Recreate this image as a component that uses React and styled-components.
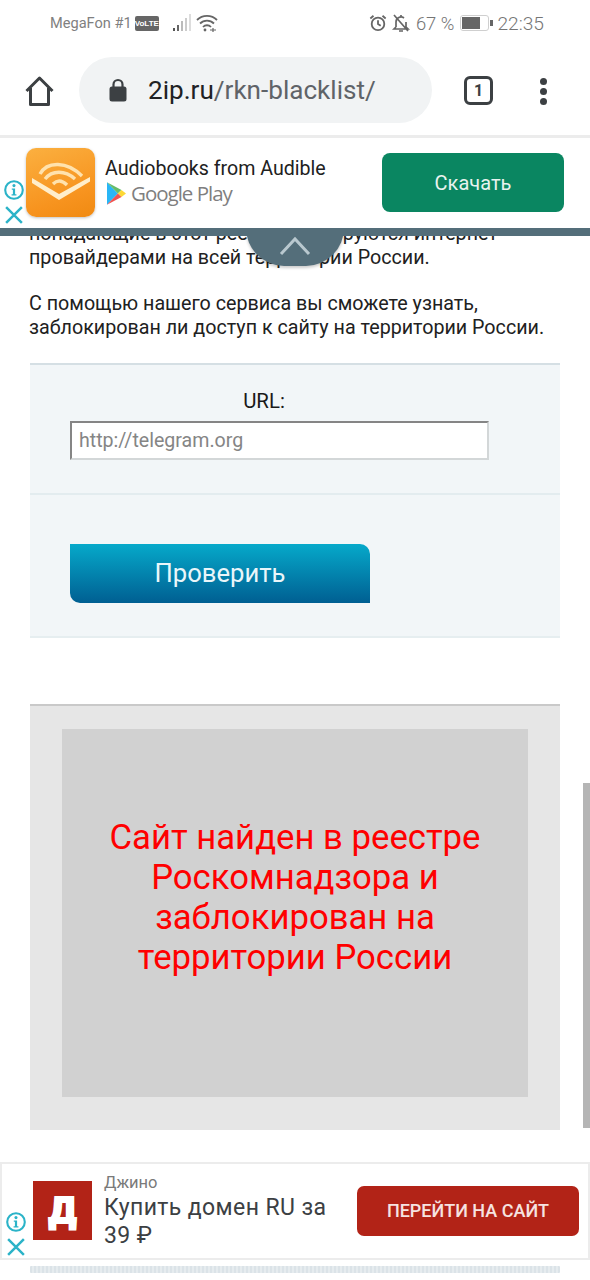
import React from 'react';
import styled, { createGlobalStyle } from 'styled-components';

const Global = createGlobalStyle`
  html, body { margin: 0; padding: 0; background: #fff; }
  body { font-family: Roboto, "Noto Sans", sans-serif; }
  * { box-sizing: border-box; }
`;

const Page = styled.div`
  position: relative;
  width: 590px;
  height: 1280px;
  overflow: hidden;
  background: #fff;
`;

const TopChrome = styled.header`
  position: relative;
  z-index: 3;
  background: #fff;
  height: 138px;
  border-bottom: 3px solid #ececec;
`;

const StatusBar = styled.div`
  height: 46px;
  display: flex;
  align-items: center;
  justify-content: space-between;
  padding: 0 46px 0 50px;
  color: #777;
`;

const StatusGroup = styled.div`
  display: flex;
  align-items: center;
`;

const Carrier = styled.span`
  font-size: 14.6px;
  color: #808080;
`;

const Volte = styled.span`
  margin-left: 3px;
  width: 24px;
  height: 15px;
  background: #666;
  border-radius: 2px;
  color: #fff;
  font-size: 8px;
  font-weight: 700;
  line-height: 15px;
  text-align: center;
  font-family: "Liberation Sans", sans-serif;
`;

const StatusText = styled.span`
  font-size: ${p => p.$size}px;
  color: #757575;
  font-weight: 300;
`;

const Toolbar = styled.div`
  height: 89px;
  display: flex;
  align-items: flex-start;
  padding: 11px 0 0 25px;
`;

const Omnibox = styled.div`
  margin-left: 25px;
  width: 353px;
  height: 66px;
  border-radius: 33px;
  background: #f1f3f4;
  display: flex;
  align-items: center;
  padding-left: 30px;
  font-size: 26.1px;
  line-height: 1;
`;

const Host = styled.span`
  margin-left: 21px;
  color: #202124;
`;

const PathPart = styled.span`
  color: #5f6368;
`;

const TabCount = styled.div`
  margin: 19px 0 0 32px;
  width: 29px;
  height: 29px;
  border: 3px solid #3c4043;
  border-radius: 6px;
  font-size: 16px;
  font-weight: 700;
  color: #3c4043;
  display: flex;
  align-items: center;
  justify-content: center;
`;

const MenuDots = styled.div`
  margin: 21px 0 0 47px;
  display: flex;
  flex-direction: column;
  gap: 3px;
`;

const Dot = styled.span`
  width: 7px;
  height: 7px;
  border-radius: 50%;
  background: #3c4043;
`;

const AnchorAd = styled.section`
  position: relative;
  z-index: 2;
  height: 98px;
  background: #fff;
  border-bottom: 8px solid #546e7a;
  display: flex;
  align-items: flex-start;
`;

const AdMarks = styled.div`
  position: absolute;
  display: flex;
  flex-direction: column;
  align-items: center;
  background: #fff;
  width: 26px;
  gap: 5px;
  left: 1px;
  top: ${p => p.$top}px;
`;

const AppIcon = styled.div`
  margin: 10px 0 0 26px;
  width: 69px;
  height: 69px;
  flex: none;
  border-radius: 10px;
  background: linear-gradient(160deg, #fbb040, #f7931e 70%, #f08a12);
  box-shadow: 0 1px 3px rgba(0,0,0,.25);
  position: relative;
  z-index: 1;
`;

const AdCopy = styled.div`
  margin: 20px 0 0 10px;
  width: 277px;
  flex: none;
`;

const AdTitle = styled.div`
  font-size: 19.6px;
  line-height: 22px;
  color: #212121;
`;

const PlayRow = styled.div`
  display: flex;
  align-items: center;
  gap: 5px;
  margin-left: 2px;
`;

const PlayText = styled.span`
  font-family: "Open Sans", sans-serif;
  font-size: 20.5px;
  line-height: 26px;
  letter-spacing: -1px;
  color: #7f7f7f;
`;

const InstallButton = styled.div`
  margin-top: 15px;
  width: 182px;
  height: 59px;
  border-radius: 8px;
  background: #0a8661;
  color: #e8f3ef;
  font-size: 20px;
  display: flex;
  align-items: center;
  justify-content: center;
`;

const Content = styled.main`
  margin-top: -14px;
  padding: 0 30px;
`;

const Paragraph = styled.p`
  margin: 0 0 23px -1px;
  font-size: 19.7px;
  line-height: 23.7px;
  color: #212121;
  white-space: nowrap;
`;

const Form = styled.div`
  margin-top: 23px;
  background: #f2f6f8;
  border-top: 2px solid #d5dfe4;
  border-bottom: 2px solid #e6eef0;
`;

const UrlSection = styled.div`
  height: 130px;
  padding: 25px 40px 0;
  border-bottom: 2px solid #e3ecef;
`;

const UrlLabel = styled.div`
  width: 388px;
  text-align: center;
  font-size: 20.4px;
  line-height: 22px;
  color: #1a1a1a;
`;

const UrlField = styled.div`
  margin-top: 9px;
  width: 419px;
  height: 39px;
  background: #fff;
  border: 2px solid #d3d7d8;
  border-top-color: #858585;
  border-left-color: #858585;
  font-size: 19.6px;
  line-height: 35px;
  padding-left: 7px;
  color: #858585;
`;

const ButtonSection = styled.div`
  height: 141px;
  padding: 49px 40px 0;
`;

const CheckButton = styled.div`
  width: 300px;
  height: 59px;
  border-radius: 0 10px 0 10px;
  background: linear-gradient(#06a9ca, #005f92);
  color: #eaf6fa;
  font-size: 25.6px;
  display: flex;
  align-items: center;
  justify-content: center;
`;

const ResultPanel = styled.div`
  margin-top: 66px;
  height: 426px;
  background: #e6e6e6;
  border-top: 2px solid #c9c9c9;
  padding: 23px 32px 33px 32px;
`;

const ResultInner = styled.div`
  height: 368px;
  background: #d1d1d1;
  color: #f00;
  font-size: 34.7px;
  line-height: 40px;
  text-align: center;
  padding: 88px 40px 0;
`;

const BottomAd = styled.section`
  position: relative;
  margin-top: 32px;
  height: 98px;
  background: #fff;
  border: 2px solid #ececec;
  display: flex;
  align-items: flex-start;
`;

const DomainLogo = styled.div`
  margin: 17px 0 0 31px;
  width: 59px;
  height: 59px;
  flex: none;
  background: #b22317;
  color: #fff;
  font-weight: 900;
  font-size: 37px;
  line-height: 59px;
  text-align: center;
  -webkit-text-stroke: 2px #fff;
`;

const BottomCopy = styled.div`
  margin: 9px 0 0 12px;
  width: 244px;
  flex: none;
`;

const Brand = styled.div`
  font-size: 16.5px;
  line-height: 20px;
  color: #7a7a7a;
`;

const Headline = styled.div`
  font-size: 23px;
  line-height: 28px;
  letter-spacing: 0.4px;
  color: #3c4043;
  margin-top: 1px;
`;

const VisitButton = styled.div`
  margin: 22px 0 0 9px;
  width: 222px;
  height: 50px;
  background: #b22317;
  border-radius: 7px;
  color: #f6e3e1;
  font-size: 18px;
  font-weight: 500;
  display: flex;
  align-items: center;
  justify-content: center;
`;

const FooterStripe = styled.div`
  margin: 6px 30px 0;
  height: 7px;
  background: repeating-linear-gradient(90deg, #dbe3e8 0 2px, #e6ecef 2px 4px);
  border-radius: 1px;
`;

const Scrollbar = styled.div`
  position: absolute;
  right: 0;
  top: 783px;
  width: 7px;
  height: 345px;
  background: #b5b5b5;
`;

const PullTab = styled.div`
  position: absolute;
  z-index: 1;
  left: 246px;
  top: 228px;
  width: 98px;
  height: 38px;
  border-radius: 0 0 49px 49px;
  background: #546e7a;
  box-shadow: 0 2px 3px rgba(0,0,0,.2);
  display: flex;
  justify-content: center;
  padding-top: 8px;
`;

const AdInfo = () => (
  <svg width="22" height="22" viewBox="0 0 20 20">
    <circle cx="10" cy="10" r="8" fill="none" stroke="#2bb3c8" strokeWidth="1.9" />
    <circle cx="10" cy="6" r="1.4" fill="#2bb3c8" />
    <path d="M8 8.600h3v5.200h1.200v1.200H7.800v-1.200H9V9.800H8z" fill="#2bb3c8" />
  </svg>
);

const AdClose = () => (
  <svg width="18" height="18" viewBox="0 0 16 16">
    <path d="M1 1l14 14M15 1L1 15" stroke="#2bb3c8" strokeWidth="2.2" fill="none" />
  </svg>
);

const Home = () => (
  <svg width="29" height="30" viewBox="0 0 29 30" fill="none" style={{ flex: 'none', marginTop: 19 }}>
    <path d="M1.500 15L14.500 2 27.500 15M5.500 12v16.500h18V12" stroke="#3c4043" strokeWidth="3" strokeLinejoin="round" />
  </svg>
);

const Lock = () => (
  <svg width="18" height="24" viewBox="0 0 18 24" style={{ flex: 'none' }}>
    <path d="M4.500 9V6.500a4.500 4.500 0 0 1 9 0V9" fill="none" stroke="#3c4043" strokeWidth="2.2" />
    <rect x="0.500" y="8.500" width="17" height="15" rx="2.500" fill="#3c4043" />
  </svg>
);

const Signal = () => (
  <svg width="18" height="18" viewBox="0 0 18 18" style={{ marginLeft: 14 }}>
    <rect x="0" y="14" width="2" height="3" fill="#555" />
    <rect x="4" y="11" width="2" height="6" fill="#666" />
    <rect x="8" y="7" width="2" height="10" fill="#bbb" />
    <rect x="12" y="4" width="2" height="13" fill="#ccc" />
    <rect x="16" y="0" width="2" height="17" fill="#ddd" />
  </svg>
);

const Wifi = () => (
  <svg width="22" height="18" viewBox="0 0 22 18" fill="none" stroke="#666" strokeWidth="1.8" style={{ marginLeft: 5 }}>
    <path d="M1 6a14 14 0 0 1 20 0M4 9.500a10 10 0 0 1 14 0M7 13a5.500 5.500 0 0 1 8 0" />
    <circle cx="9" cy="16" r="1.400" fill="#666" stroke="none" />
    <path d="M14 16h6M17 14v4" strokeWidth="1.200" />
  </svg>
);

const Alarm = () => (
  <svg width="18" height="18" viewBox="0 0 20 20" fill="none" stroke="#666" strokeWidth="2">
    <circle cx="10" cy="11" r="7" />
    <path d="M10 7v4l3 2M1.500 5l3.500-3M18.500 5L15 2" />
  </svg>
);

const BellOff = () => (
  <svg width="20" height="20" viewBox="0 0 20 20" fill="none" stroke="#666" strokeWidth="1.7" style={{ marginLeft: 4 }}>
    <path d="M5 14V9a5 5 0 0 1 8-4M15 9v5l2 2H3l2-2M8 18h4M10 2v2M3 2l14 16" />
  </svg>
);

const Battery = () => (
  <svg width="33" height="16" viewBox="0 0 33 16" style={{ margin: '0 4px 0 6px' }}>
    <rect x="0.500" y="0.500" width="28" height="15" rx="2.500" fill="#fff" stroke="#cfcfcf" />
    <rect x="2" y="2" width="18" height="12" fill="#666" />
    <rect x="30" y="5" width="3" height="6" fill="#666" />
  </svg>
);

const AudibleMark = () => (
  <svg width="69" height="69" viewBox="0 0 69 69" fill="none">
    <path d="M6 30l27 16 31-17v4.500L33 52 6 35z" fill="#ffeecb" />
    <path d="M14 26c7-13 27-13 42 2" stroke="#ffe2ad" strokeWidth="3.400" />
    <path d="M19 31c7-9 20-9 30 0" stroke="#ffe2ad" strokeWidth="3.400" />
    <path d="M27 36c4-4 9-4 14 1" stroke="#ffe2ad" strokeWidth="3.400" />
  </svg>
);

const PlayLogo = () => (
  <svg width="19" height="25" viewBox="0 0 21 25">
    <path d="M0 0v25l12-12.500z" fill="#29b6f6" />
    <path d="M0 0l12 12.500 4-4z" fill="#66bb6a" />
    <path d="M16 8.500l-4 4 4 4 5-4z" fill="#fdd835" />
    <path d="M0 25l12-12.500 4 4z" fill="#ef5350" />
  </svg>
);

const Chevron = () => (
  <svg width="32" height="20" viewBox="0 0 32 20" fill="none">
    <path d="M2 18L16 3l14 15" stroke="#b9c8cf" strokeWidth="3" />
  </svg>
);

export default function App() {
  return (
    <Page>
      <Global />
      <TopChrome>
        <StatusBar>
          <StatusGroup>
            <Carrier>MegaFon #1</Carrier>
            <Volte>VoLTE</Volte>
            <Signal />
            <Wifi />
          </StatusGroup>
          <StatusGroup>
            <Alarm />
            <BellOff />
            <StatusText $size={18.400}>&nbsp;67 %</StatusText>
            <Battery />
            <StatusText $size={19.200}>22:35</StatusText>
          </StatusGroup>
        </StatusBar>
        <Toolbar>
          <Home />
          <Omnibox>
            <Lock />
            <Host>2ip.ru<PathPart>/rkn-blacklist/</PathPart></Host>
          </Omnibox>
          <TabCount>1</TabCount>
          <MenuDots>
            <Dot /><Dot /><Dot />
          </MenuDots>
        </Toolbar>
      </TopChrome>

      <AnchorAd>
        <AdMarks $top={41}>
          <AdInfo />
          <AdClose />
        </AdMarks>
        <AppIcon><AudibleMark /></AppIcon>
        <AdCopy>
          <AdTitle>Audiobooks from Audible</AdTitle>
          <PlayRow>
            <PlayLogo />
            <PlayText>Google Play</PlayText>
          </PlayRow>
        </AdCopy>
        <InstallButton>Скачать</InstallButton>
      </AnchorAd>
      <PullTab><Chevron /></PullTab>

      <Content>
        <Paragraph>
          попадающие в этот реестр, блокируются интернет<br />
          провайдерами на всей территории России.
        </Paragraph>
        <Paragraph>
          С помощью нашего сервиса вы сможете узнать,<br />
          заблокирован ли доступ к сайту на территории России.
        </Paragraph>
        <Form>
          <UrlSection>
            <UrlLabel>URL:</UrlLabel>
            <UrlField>http://telegram.org</UrlField>
          </UrlSection>
          <ButtonSection>
            <CheckButton>Проверить</CheckButton>
          </ButtonSection>
        </Form>
        <ResultPanel>
          <ResultInner>
            Сайт найден в реестре Роскомнадзора и заблокирован на территории России
          </ResultInner>
        </ResultPanel>
      </Content>

      <BottomAd>
        <AdMarks $top={47}>
          <AdInfo />
          <AdClose />
        </AdMarks>
        <DomainLogo>Д</DomainLogo>
        <BottomCopy>
          <Brand>Джино</Brand>
          <Headline>Купить домен RU за 39 ₽</Headline>
        </BottomCopy>
        <VisitButton>ПЕРЕЙТИ НА САЙТ</VisitButton>
      </BottomAd>
      <FooterStripe />
      <Scrollbar />
    </Page>
  );
}
